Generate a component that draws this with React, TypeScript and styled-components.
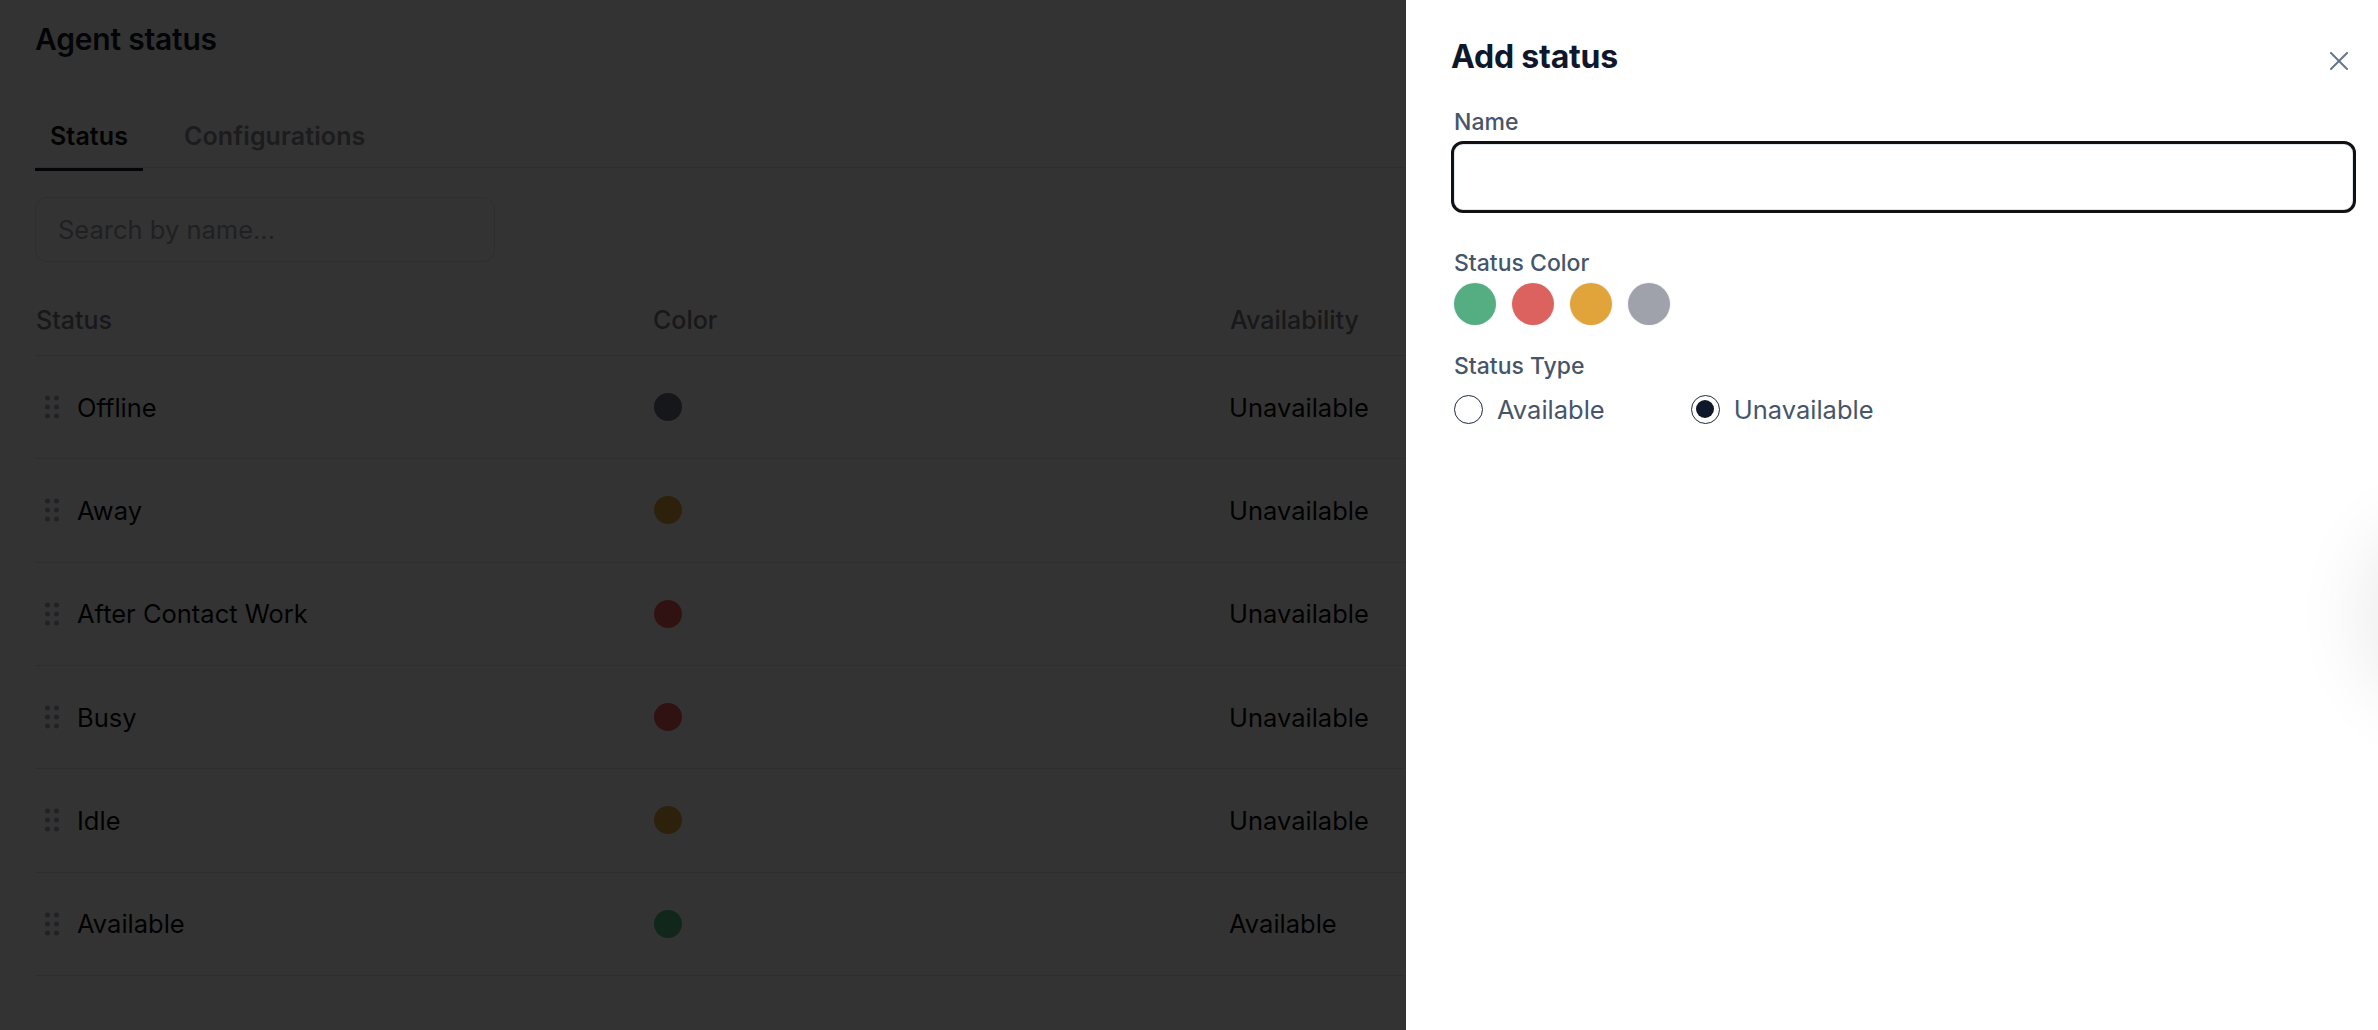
import React from "react";
import styled, { createGlobalStyle } from "styled-components";

const GlobalStyle = createGlobalStyle`
  html, body {
    margin: 0;
    padding: 0;
    background: #ffffff;
    font-family: "Inter", "Noto Sans", sans-serif;
    overflow: hidden;
  }
  * { box-sizing: border-box; }
`;

type StatusRow = {
  name: string;
  color: string;
  availability: string;
};

const rows: StatusRow[] = [
  { name: "Offline", color: "#6b7280", availability: "Unavailable" },
  { name: "Away", color: "#e2a43a", availability: "Unavailable" },
  { name: "After Contact Work", color: "#f25a5a", availability: "Unavailable" },
  { name: "Busy", color: "#f25a5a", availability: "Unavailable" },
  { name: "Idle", color: "#e2a43a", availability: "Unavailable" },
  { name: "Available", color: "#5cc08a", availability: "Available" },
];

const swatches = ["#55ae82", "#dc625f", "#e0a43a", "#9fa1ab"];

const DragHandle = () => (
  <svg width="28" height="28" viewBox="0 0 28 28" fill="#a3aab8">
    <circle cx="12.5" cy="5" r="2.5" />
    <circle cx="21.5" cy="5" r="2.5" />
    <circle cx="12.5" cy="14" r="2.5" />
    <circle cx="21.5" cy="14" r="2.5" />
    <circle cx="12.5" cy="23" r="2.5" />
    <circle cx="21.5" cy="23" r="2.5" />
  </svg>
);

const CloseIcon = () => (
  <svg width="18" height="18" viewBox="0 0 18 18" fill="none" stroke="#64748b" strokeWidth="2" strokeLinecap="round">
    <path d="M1 1L17 17" />
    <path d="M17 1L1 17" />
  </svg>
);

export default function App() {
  return (
    <>
      <GlobalStyle />
      <Page>
        <PageTitle>Agent status</PageTitle>
        <TabList>
          <Tab active>Status</Tab>
          <Tab>Configurations</Tab>
        </TabList>
        <Search placeholder="Search by name..." />
        <Table>
          <HeaderRow>
            <HeadCell>Status</HeadCell>
            <HeadCell>Color</HeadCell>
            <HeadCell>Availability</HeadCell>
          </HeaderRow>
          {rows.map((r) => (
            <Row key={r.name}>
              <NameCell>
                <DragHandle />
                <span>{r.name}</span>
              </NameCell>
              <Cell>
                <Dot color={r.color} />
              </Cell>
              <Cell>{r.availability}</Cell>
            </Row>
          ))}
        </Table>
      </Page>

      <Backdrop />

      <Drawer>
        <DrawerHeader>
          <DrawerTitle>Add status</DrawerTitle>
          <CloseButton aria-label="Close">
            <CloseIcon />
          </CloseButton>
        </DrawerHeader>

        <Field gap={5} top={31}>
          <Label>Name</Label>
          <NameInput />
        </Field>

        <Field gap={6} top={36}>
          <Label>Status Color</Label>
          <Swatches>
            {swatches.map((c) => (
              <Swatch key={c} color={c} />
            ))}
          </Swatches>
        </Field>

        <Field gap={14} top={27}>
          <Label>Status Type</Label>
          <RadioGroup>
            <RadioItem>
              <Radio />
              Available
            </RadioItem>
            <RadioItem>
              <Radio checked />
              Unavailable
            </RadioItem>
          </RadioGroup>
        </Field>
      </Drawer>
      <EdgeShadow />
    </>
  );
}

const Page = styled.div`
  min-height: 100vh;
  padding: 0 35px;
  display: flex;
  flex-direction: column;
`;

const PageTitle = styled.h1`
  margin: 17px 0 0;
  height: 44px;
  line-height: 44px;
  font-size: 30px;
  font-weight: 600;
  color: #111827;
  letter-spacing: -0.2px;
`;

const TabList = styled.div`
  margin-top: 43px;
  display: flex;
  gap: 26px;
  border-bottom: 1.5px solid #e5e7eb;
  height: 64px;
`;

const Tab = styled.div<{ active?: boolean }>`
  position: relative;
  height: 64px;
  padding: 0 15px;
  display: flex;
  align-items: center;
  font-size: 25px;
  font-weight: 600;
  letter-spacing: 0.1px;
  color: ${(p) => (p.active ? "#0a0a0a" : "#8a8a94")};

  &::after {
    content: "";
    display: ${(p) => (p.active ? "block" : "none")};
    position: absolute;
    left: 0;
    right: 0;
    bottom: -3px;
    height: 3px;
    background: #0f172a;
  }
`;

const Search = styled.input`
  margin-top: 29px;
  width: 460px;
  height: 65px;
  border: 1.5px solid #e4e4e7;
  border-radius: 12px;
  padding: 0 22px;
  font-family: inherit;
  font-size: 25.5px;
  color: #111827;
  outline: none;
  background: #fff;

  &::placeholder {
    color: #a1a1aa;
  }
`;

const Table = styled.div`
  margin-top: 22px;
  display: flex;
  flex-direction: column;
`;

const HeaderRow = styled.div`
  display: grid;
  grid-template-columns: 617px 577px 1fr;
  height: 72px;
  align-items: center;
  border-bottom: 1px solid #e5e7eb;
`;

const HeadCell = styled.div`
  font-size: 25px;
  font-weight: 500;
  color: #7a7a85;
  padding-left: 1px;
`;

const Row = styled.div`
  display: grid;
  grid-template-columns: 617px 577px 1fr;
  height: 103.33px;
  align-items: center;
  border-bottom: 1px solid #e5e7eb;
`;

const Cell = styled.div`
  font-size: 25.5px;
  color: #09090b;
  display: flex;
  align-items: center;
`;

const NameCell = styled(Cell)`
  gap: 14px;
`;

const Dot = styled.span<{ color: string }>`
  display: block;
  width: 28px;
  height: 28px;
  margin-left: 2px;
  border-radius: 50%;
  background: ${(p) => p.color};
`;

const Backdrop = styled.div`
  position: fixed;
  inset: 0;
  background: rgba(0, 0, 0, 0.8);
`;

const Drawer = styled.aside`
  position: fixed;
  top: 0;
  right: 0;
  bottom: 0;
  width: 972px;
  background: #ffffff;
  padding: 0 22px 0 45px;
  display: flex;
  flex-direction: column;
`;

const DrawerHeader = styled.div`
  display: flex;
  justify-content: space-between;
  align-items: flex-start;
`;

const DrawerTitle = styled.h2`
  margin: 37px 0 0;
  height: 40px;
  line-height: 40px;
  font-size: 32px;
  font-weight: 700;
  color: #0f172a;
  letter-spacing: -0.2px;
`;

const CloseButton = styled.button`
  margin: 52px 8px 0 0;
  padding: 0;
  width: 18px;
  height: 18px;
  border: none;
  background: transparent;
  display: flex;
`;

const Field = styled.div<{ gap?: number; top?: number }>`
  margin-top: ${(p) => p.top ?? 29}px;
  display: flex;
  flex-direction: column;
  gap: ${(p) => p.gap ?? 8}px;
`;

const Label = styled.label`
  height: 28px;
  line-height: 28px;
  font-size: 23px;
  font-weight: 500;
  color: #475569;
  padding-left: 3px;
`;

const NameInput = styled.input`
  width: 100%;
  height: 72px;
  border: 3px solid #111111;
  border-radius: 12px;
  outline: none;
  font-family: inherit;
  font-size: 24px;
  padding: 0 18px;
  background: #fff;
  box-shadow: inset 0 0 0 1px #e2e8f0;
`;

const Swatches = styled.div`
  display: flex;
  gap: 16px;
  padding-left: 3px;
`;

const Swatch = styled.span<{ color: string }>`
  width: 42px;
  height: 42px;
  border-radius: 50%;
  background: ${(p) => p.color};
  box-shadow: 0 0 0 1px rgba(0, 0, 0, 0.04);
`;

const RadioGroup = styled.div`
  display: flex;
  gap: 86px;
  padding-left: 3px;
`;

const RadioItem = styled.label`
  display: flex;
  align-items: center;
  gap: 14px;
  font-size: 25.5px;
  color: #475569;
  height: 30px;
`;

const Radio = styled.span<{ checked?: boolean }>`
  width: 29px;
  height: 29px;
  border-radius: 50%;
  border: 1.5px solid #1e293b;
  position: relative;
  flex-shrink: 0;

  &::after {
    content: "";
    display: ${(p) => (p.checked ? "block" : "none")};
    position: absolute;
    inset: 4.5px;
    border-radius: 50%;
    background: #0f172a;
  }
`;

const EdgeShadow = styled.div`
  position: fixed;
  right: -90px;
  top: 540px;
  width: 90px;
  height: 150px;
  border-radius: 50%;
  box-shadow: 0 0 70px 20px rgba(0, 0, 0, 0.07);
`;
